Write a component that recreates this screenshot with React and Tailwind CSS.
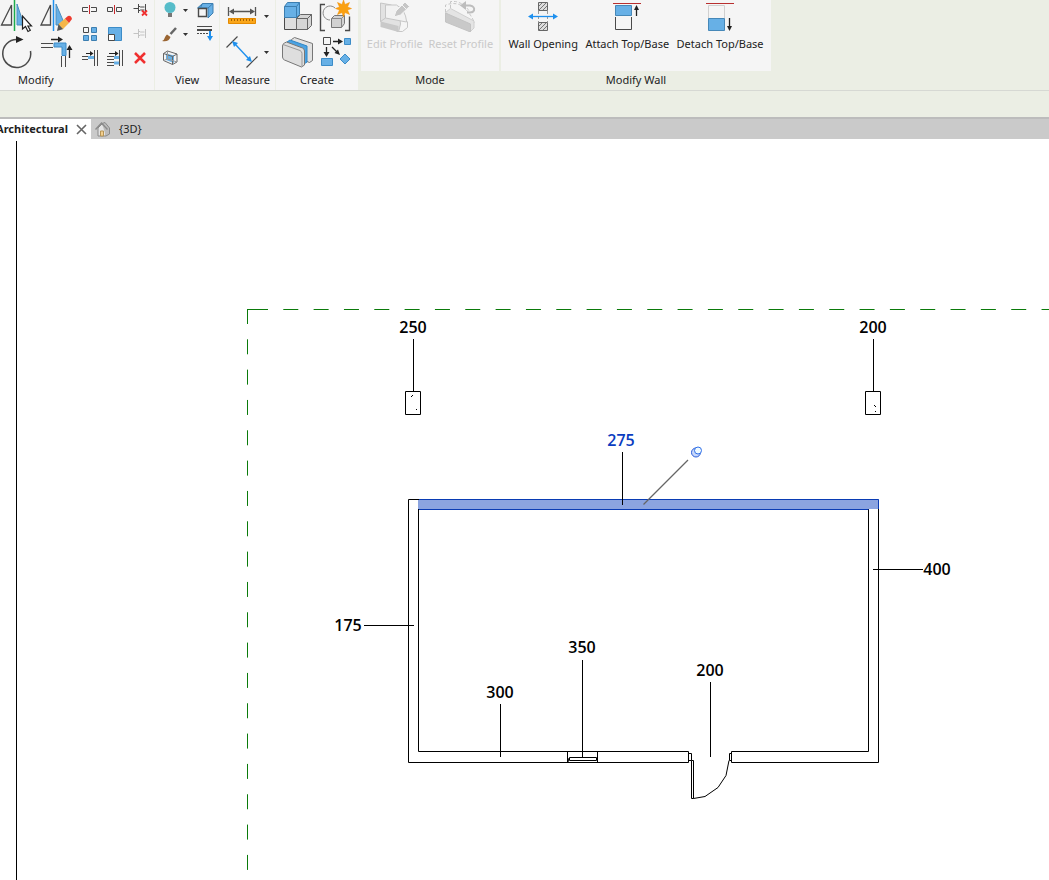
const DARK = "#4a4a4a";
const BLUE = "#67b0e6";
const SKY = "#1e90ee";

/* Every glyph is drawn in ribbon coordinates; `box` selects its part. */
function Glyph({ box, children }) {
  const [, , w, h] = box.split(" ");
  return (
    <svg viewBox={box} width={w} height={h} fill="none" stroke={DARK} strokeWidth="1" aria-hidden="true" className="block shrink-0">
      {children}
    </svg>
  );
}

function Tool({ label, box, children }) {
  return (
    <button type="button" aria-label={label} className="block">
      <Glyph box={box}>{children}</Glyph>
    </button>
  );
}

function LabelTool({ label, box, disabled, children }) {
  return (
    <button
      type="button"
      disabled={disabled}
      className="flex flex-col items-center gap-1 whitespace-nowrap text-[#222] disabled:text-[#c9c9c9]"
    >
      <Glyph box={box}>{children}</Glyph>
      <span className="leading-4">{label}</span>
    </button>
  );
}

function Panel({ title, className, titleClass = "text-center", children }) {
  return (
    <section aria-label={title} className={`flex shrink-0 flex-col bg-[#f5f5f5] ${className}`}>
      <div className="flex h-[71px] items-start">{children}</div>
      <h2 className={`h-[19px] leading-[18px] ${titleClass}`}>{title}</h2>
    </section>
  );
}

const Caret = ({ x, y }) => <path d={`M${x - 3} ${y - 1}h5l-2.500 3z`} fill="#333" stroke="none" />;

const Pin = ({ y, color }) => (
  <g stroke={color}>
    <path d={`M133.500 ${y}h4.500M138.500 ${y - 4.5}v9M138.500 ${y - 2.5}l2 1h4M138.500 ${y + 2.5}l2-1h4M145.500 ${y - 4.5}v9`} />
  </g>
);

function ModifyPanel() {
  return (
    <Panel title="Modify" className="w-[154px]" titleClass="pl-[18px]">
      <div className="grid grid-cols-[39px_39px]">
        <Tool label="Mirror - Pick Axis" box="0 0 39 35">
          <path d="M1.500 25h10V5z" strokeWidth="1.300" />
          <path d="M17 4v21h7z" fill={BLUE} stroke="#4a8fc0" />
          <path d="M14.500 0v31" stroke="#1cab4b" strokeWidth="1.500" />
          <path d="M22.500 16v13l3-2.500 2.500 5 2.300-1.200-2.400-4.300h3.600z" fill="#fff" stroke="#222" strokeWidth="1.200" />
        </Tool>
        <Tool label="Mirror - Draw Axis" box="39 0 39 35">
          <path d="M41 25h9.500V5z" strokeWidth="1.300" />
          <path d="M56 4v21h9z" fill={BLUE} stroke="#4a8fc0" />
          <path d="M53.500 0v31" stroke={SKY} strokeWidth="1.500" />
          <path d="M57 31l1.500-7 5 5z" fill="#555" stroke="none" />
          <path d="M58.500 24l6.500-5.500 4 4.500-6 6z" fill="#f5b64a" stroke="none" />
          <path d="M65 18.500l3-2.500q3-1 4 3l-3 4z" fill="#ee3b2f" stroke="none" />
        </Tool>
        <Tool label="Rotate" box="0 35 39 36">
          <path d="M30.500 51A14 14 0 1 1 17 39.500" strokeWidth="1.500" />
          <path d="M16 36l7.500 3.500L16 43z" fill="#222" stroke="none" />
        </Tool>
        <Tool label="Trim/Extend to Corner" box="39 35 39 36">
          <path d="M41 43.500h12M41 47.500h12M61.500 56v11M65.500 56v11" />
          <path d="M54 43h12v12.500h-4V47h-8z" fill={BLUE} stroke="#3c8cc8" />
          <path d="M51 39.500h8M69.500 58v-9" stroke="#222" strokeWidth="1.300" />
          <path d="M58 36.500l5 3-5 3zM66.500 50l3-5 3 5z" fill="#222" stroke="none" />
        </Tool>
      </div>
      <div className="grid grid-cols-[25px_25px_25px]">
        <Tool label="Split Element" box="78 0 25 22">
          <path d="M88 7.500h-5.500v4h5.500M91 7.500h5.500v4H91" />
          <path d="M89.500 5v9" stroke="#c8282d" />
        </Tool>
        <Tool label="Split with Gap" box="103 0 25 22">
          <path d="M107.500 7.500h5v4h-5zM116.500 7.500h5v4h-5z" />
          <path d="M114.500 5v9" stroke="#c8282d" />
        </Tool>
        <Tool label="Unpin" box="128 0 25 22">
          <Pin y={8.5} color={DARK} />
          <path d="M142 10.500l5 5M147 10.500l-5 5" stroke="#f03030" strokeWidth="1.800" />
        </Tool>
        <Tool label="Array" box="78 22 25 24">
          <path d="M83.500 27.500h5v5h-5z" />
          <path d="M91.500 27.500h5v5h-5zM83.500 35.500h5v5h-5zM91.500 35.500h5v5h-5z" fill={BLUE} stroke="#3c7eb0" />
        </Tool>
        <Tool label="Scale" box="103 22 25 24">
          <path d="M108.500 27.500h13v13h-13z" fill={BLUE} stroke="#3c8cc8" />
          <path d="M108.500 34.500h6v6h-6z" fill="#fff" />
        </Tool>
        <Tool label="Pin" box="128 22 25 24">
          <Pin y={33.5} color="#c4c4c4" />
        </Tool>
        <Tool label="Trim Single" box="78 46 25 24">
          <path d="M82 56.500h6M82 59.500h6M94.500 50v16M97.500 50v16" />
          <path d="M88 56h6v3h-6z" fill={BLUE} stroke="none" />
          <path d="M86 53.500h5" stroke="#222" />
          <path d="M90 51l3.500 2.500-3.500 2.500z" fill="#222" stroke="none" />
        </Tool>
        <Tool label="Trim Multiple" box="103 46 25 24">
          <path d="M107 56.500h7M107 59.500h7M107 62.500h7M107 65.500h7M119.500 50v16M122.500 50v16" />
          <path d="M114 56h5v3h-5zM114 61.500h5v3h-5z" fill={BLUE} stroke="none" />
          <path d="M109 53.500h6" stroke="#222" />
          <path d="M115 51l3.500 2.500-3.500 2.500z" fill="#222" stroke="none" />
        </Tool>
        <Tool label="Delete" box="128 46 25 24">
          <path d="M135 53l10 10M145 53l-10 10" stroke="#f03030" strokeWidth="2.500" />
        </Tool>
      </div>
    </Panel>
  );
}

function ViewPanel() {
  return (
    <Panel title="View" className="w-[64px]">
      <div className="grid grid-cols-[36px_28px]">
        <Tool label="Hide in View" box="155 0 36 22">
          <circle cx="170" cy="7.500" r="5.500" fill="#56bcc9" stroke="none" />
          <path d="M168 13h4v4h-4z" fill="#777" stroke="none" />
          <Caret x={186} y={10} />
        </Tool>
        <Tool label="Selection Box" box="191 0 28 22">
          <path d="M197.500 8l5-4.500H213v9.500l-5 5V8z" fill={BLUE} stroke="#3c7eb0" />
          <path d="M198.500 8.500h8v8h-8z" fill="#f5f5f5" strokeWidth="1.400" />
          <path d="M202.500 3.500l-2 4M213 3.500l-5 4.500" stroke="#3c7eb0" />
        </Tool>
        <Tool label="Override Graphics" box="155 22 36 24">
          <path d="M176 28l-5.500 6" stroke="#666" strokeWidth="2.500" />
          <path d="M162 41c3-1 2-4 5-6.500l3.500 2.500c-1 3.500-4 5-8.500 4z" fill="#9a6532" stroke="none" />
          <Caret x={186} y={34} />
        </Tool>
        <Tool label="Linework" box="191 22 28 24">
          <path d="M197 26.500h15" />
          <path d="M197 30h15" strokeWidth="2" />
          <path d="M197 33.500h12" strokeDasharray="2 1" />
          <path d="M210 31v6" stroke={SKY} strokeWidth="2" />
          <path d="M207 36h6l-3 5z" fill={SKY} stroke="none" />
        </Tool>
        <Tool label="Displace Elements" box="155 46 36 25">
          <path d="M166 53.500l8 2v7.500l-8-3z" fill={BLUE} stroke="none" />
          <path d="M163.500 53.500l9 3v8l-9-4zM163.500 53.500l4-2.500 9.500 3-4.500 2.500M177 54v8l-4.500 2.500" stroke="#666" />
          <path d="M167.500 51v8l9.500 3M167.500 59l-4 1.500" stroke="#999" />
        </Tool>
      </div>
    </Panel>
  );
}

function MeasurePanel() {
  return (
    <Panel title="Measure" className="w-[55px]">
      <div className="flex flex-col">
        <Tool label="Measure Dimension" box="220 0 55 33">
          <path d="M228.500 7v9M255.500 7v9M231 11.500h22" stroke="#555" strokeWidth="1.300" />
          <path d="M229 11.500l5-3v6zM255 11.500l-5-3v6z" fill="#555" stroke="none" />
          <path d="M228.500 18.500h27v5h-27z" fill="#faa61a" stroke="#e58a00" />
          <path d="M231.500 19v2M234.500 19v2M237.500 19v2M240.500 19v2M243.500 19v2M246.500 19v2M249.500 19v2M252.500 19v2" stroke="#a86400" />
          <Caret x={267} y={16} />
        </Tool>
        <Tool label="Aligned Dimension" box="220 33 55 38">
          <path d="M226.500 47.500l11-11M246.500 67.500l11-11" strokeWidth="1.200" />
          <path d="M235 44l14 15" stroke={SKY} strokeWidth="1.400" />
          <path d="M232 41l6 2-4 4zM252 62l-6-2 4-4z" fill={SKY} stroke="none" />
          <Caret x={267} y={52} />
        </Tool>
      </div>
    </Panel>
  );
}

function CreatePanel() {
  return (
    <Panel title="Create" className="w-[82px]">
      <div className="grid grid-cols-[41px_41px]">
        <Tool label="Create Assembly" box="276 0 41 35">
          <path d="M284.500 17.500h12v12h-12z" fill="#dedede" />
          <path d="M296.500 18.500h11v11h-11zM296.500 18.500l4-4h11l-4 4zM307.500 29.500l4-4v-11l-4 4z" fill="#d5d5d5" stroke="#666" />
          <path d="M284.500 6.500l3-4h12v12l-3 3h-12z" fill={BLUE} stroke="#3c7eb0" />
          <path d="M284.500 6.500h12v11M296.500 6.500l3-4" stroke="#3c7eb0" />
        </Tool>
        <Tool label="Create Group" box="317 0 41 35">
          <path d="M325 4.500h-4.500v26h4.500M345 30.500h4.500v-14" strokeWidth="1.400" />
          <path d="M335 8a7 7 0 1 0-5 12" stroke="#888" />
          <path d="M331.500 18.500l3-3h10v8l-3 4h-10z" fill="#d2d2d2" stroke="#777" />
          <path d="M331.500 18.500h10v9M341.500 18.500l3-3" stroke="#888" />
          <path d="M343.500 0l1.500 4.500 4.500-2-2 4.500 4 1.500-4 1.500 2 4.500-4.500-2-1.500 4.500-1.500-4.500-4.500 2 2-4.500-4-1.500 4-1.500-2-4.500 4.500 2z" fill="#faa00f" stroke="#f08c00" strokeWidth=".5" />
        </Tool>
        <Tool label="Create Parts" box="276 35 41 36">
          <path d="M291.500 39.500l3-2 18 6v17l-3 2-18-7z" fill="#e2e2e2" stroke="#777" />
          <path d="M287 42l3-2 17 6v16l-3 2-17-7z" fill="#4ba3e3" stroke="#2f86c6" />
          <path d="M282.500 46q0-2 2-3l2-1 16 6q2 1 2 3v14l-3 2-17-7q-2-1-2-3z" fill="#dedede" stroke="#777" />
          <path d="M283 44.500l17 6q2 1 2 3v13" stroke="#999" />
        </Tool>
        <Tool label="Create Similar" box="317 35 41 36">
          <path d="M323.500 37.500h7v7h-7z" />
          <path d="M344.500 38.500h6v6h-6zM321.500 58.500h11v7h-11zM345 54l5 5-5 5-5-5z" fill={BLUE} stroke="#3c8cc8" />
          <path d="M333 41.500h6M326.500 47v6M332 47l5 5" stroke="#222" strokeWidth="1.300" />
          <path d="M338 38.500l5 3-5 3zM323.500 52h6l-3 5zM340 55l-5.500-2 3.500-3.500z" fill="#222" stroke="none" />
        </Tool>
      </div>
    </Panel>
  );
}

function ModePanel() {
  return (
    <Panel title="Mode" className="w-[138px]" titleClass="bg-[#ebeee4] text-center">
      <div className="flex w-full justify-evenly">
        <LabelTool label="Edit Profile" disabled box="377 0 34 32">
          <path d="M379.500 3v18.500l18 10.500 2-8q0-11-9-19z" fill="#e2e2e2" stroke="#c6c6c6" />
          <path d="M384.500 5v13l21 4v-1q-1-11-10-16z" fill="#f2f2f2" stroke="#c6c6c6" />
          <path d="M379.500 21.500l5-3.500M397.500 31.500h4l5-4v-6" stroke="#c6c6c6" />
          <path d="M379.500 21.500l18 4.500v6l-18-5z" fill="#c9c9c9" stroke="none" />
          <path d="M393 17l2-6 9-9 4.500 4.500-9 8.500z" fill="#c6c6c6" stroke="#f5f5f5" />
          <path d="M401 5l4.500 4.500" stroke="#f5f5f5" />
        </LabelTool>
        <LabelTool label="Reset Profile" disabled box="443 0 36 32">
          <path d="M445.500 12.500l5-4 23.500 12.500v7l-4 4z" fill="#e4e4e4" stroke="#d0d0d0" />
          <path d="M445.500 13v9l25 10v-8z" fill="#c9c9c9" stroke="#c3c3c3" />
          <path d="M445.500 12V5q12-4 19 3t10 15M450.500 8V1.500h5q9 2 14 10" stroke="#c6c6c6" strokeDasharray="3 2" />
          <path d="M465 5.500h5q5 1 4 5-1 2-4 2h-3" stroke="#bdbdbd" strokeWidth="2" />
          <path d="M466 1v9l-6-4.500z" fill="#bdbdbd" stroke="none" />
        </LabelTool>
      </div>
    </Panel>
  );
}

function ModifyWallPanel() {
  return (
    <Panel title="Modify Wall" className="w-[270px]" titleClass="bg-[#ebeee4] text-center">
      <div className="flex w-full justify-evenly">
        <LabelTool label="Wall Opening" box="526 0 32 32">
          <path d="M537.500 2.500h9v8h-9zM537.500 22.500h9v8h-9z" fill="#ddd" stroke="#666" />
          <path d="M538 6l3-3M538 10l7-7M542 10l4-4M538 26l3-3M538 30l7-7M542 30l4-4" stroke="#777" />
          <path d="M537.500 11v11M546.500 11v11" stroke="#999" strokeDasharray="3 2" />
          <path d="M530 16.500h24" stroke={SKY} strokeWidth="1.300" />
          <path d="M527 16.500l5-3v6zM557 16.500l-5-3v6z" fill={SKY} stroke="none" />
        </LabelTool>
        <LabelTool label="Attach Top/Base" box="612 0 32 32">
          <path d="M614 3.500h28" stroke="#b82f2f" />
          <path d="M616.500 5.500h16v10h-16z" fill={BLUE} stroke="#4688b8" />
          <path d="M616.500 17v12.500h16V17" />
          <path d="M637.500 16v-7" stroke="#222" strokeWidth="1.300" />
          <path d="M635 10l2.500-5 2.500 5z" fill="#222" stroke="none" />
        </LabelTool>
        <LabelTool label="Detach Top/Base" box="705 0 32 32">
          <path d="M707 3.500h28" stroke="#b82f2f" />
          <path d="M709.500 18V5.500h16V18" stroke="#d0d0d0" />
          <path d="M709.500 18.500h16v12h-16z" fill={BLUE} stroke="#4688b8" />
          <path d="M730.500 18v9" stroke="#222" strokeWidth="1.300" />
          <path d="M728 26l2.500 5 2.500-5z" fill="#222" stroke="none" />
        </LabelTool>
      </div>
    </Panel>
  );
}

function ViewTabs() {
  return (
    <nav aria-label="Open views" className="flex h-[22px] border-t-2 border-[#bcbcbc] bg-[#cacaca]">
      <div className="flex w-[91px] items-center justify-end gap-2 bg-white pr-1">
        <a href="#plan" className="font-bold">Architectural</a>
        <button type="button" aria-label="Close view" className="shrink-0">
          <svg width="11" height="11" viewBox="0 0 11 11" stroke="#666" strokeWidth="1.600" className="block">
            <path d="M1 1l9 9M10 1l-9 9" />
          </svg>
        </button>
      </div>
      <a href="#3d" className="flex items-center gap-2 pl-1">
        <svg width="16" height="16" viewBox="0 0 16 16" fill="none" stroke="#8a8a8a" aria-hidden="true">
          <path d="M3 7l4-4 4 4.500V15H3z" fill="#e4e4e4" />
          <path d="M11 15l3.500-2V7L10 1.500 7 2.500" fill="#bbb" />
          <path d="M.500 8.500L6.500 2l6 6.500" strokeWidth="1.400" />
          <path d="M5.500 10h3v5h-3z" fill="#f3cf8e" stroke="#b59455" />
        </svg>
        <span>{"{3D}"}</span>
      </a>
    </nav>
  );
}

const TAGS = [
  { text: "250", x: 413, y: 333, line: "M413.500 339v52" },
  { text: "200", x: 873, y: 333, line: "M873.500 339v52" },
  { text: "275", x: 621, y: 446, line: "M622.500 452v53", selected: true },
  { text: "400", x: 937, y: 575, line: "M873 569.500h50" },
  { text: "175", x: 348, y: 631, line: "M364 625.500h50" },
  { text: "350", x: 582, y: 653, line: "M582.500 660v97" },
  { text: "200", x: 710, y: 676, line: "M710.500 682v75" },
  { text: "300", x: 500, y: 698, line: "M500.500 704v53" },
];

function FloorPlan() {
  return (
    <svg role="img" aria-label="Architectural floor plan" className="block h-[741px] w-full" fill="none" stroke="#000" strokeWidth="1">
      <g transform="translate(0 -139)">
        <path d="M16.500 141v760" />
        <g stroke="#0a7a0a">
          <path d="M247.500 309v15M247.500 339.300V900" strokeDasharray="15 15.330" />
          <path d="M247 309.500h21" />
          <path d="M283.300 309.500H4000" strokeDasharray="15 15.330" />
        </g>

        <path d="M405.500 391.500h15v23h-15zM865.500 391.500h15v23h-15z" />
        <path d="M411 397l2-2M416 409.500h1M874 405l2 2M875 411.500h1" />

        <path d="M418.500 499.500h-10v263h280v-11h-270v-242" />
        <path d="M878.500 509v253.500h-147v-11h137V509" />
        <path d="M418 499h461v10h-461z" fill="#8ba4e0" stroke="none" />
        <path d="M418 499.500h460.500V509M418 509.500h450.500" stroke="#0a3cb4" />
        <path d="M418.500 509v10M418.500 499v1" />

        <path d="M567.500 751.500v11M597.500 751.500v11M569.500 757.500h27v3h-27zM569 758l-1 4" />
        <path d="M688.500 753.500h3v7h-3M691.500 760.500h2v38h-2zM731.500 753.500h-2v7h2" />
        <path d="M693.500 798.500l11.500-2 13-9 8-12 3-15" />

        <path d="M643.500 504.500l44.500-44.500" stroke="#666" strokeWidth="1.300" />
        <circle cx="696" cy="452.500" r="4.500" fill="#c8d8fb" stroke="#2a5cd8" />
        <circle cx="698" cy="450.500" r="3.500" fill="#effaff" stroke="#2f6fe8" />

        {TAGS.map((tag) => (
          <g key={tag.line}>
            <path d={tag.line} />
            <text
              x={tag.x}
              y={tag.y}
              textAnchor="middle"
              stroke="none"
              fill={tag.selected ? "#0a3cc0" : "#000"}
              className="font-['Open_Sans',sans-serif] text-[16px] font-semibold"
            >
              {tag.text}
            </text>
          </g>
        ))}
      </g>
    </svg>
  );
}

export default function App() {
  return (
    <div className="min-h-screen overflow-hidden bg-white font-['Noto_Sans',sans-serif] text-[11px] text-[#222]">
      <header className="bg-[#ebeee4]">
        <div className="flex h-[91px] gap-px border-b border-[#d6d8d3]">
          <ModifyPanel />
          <ViewPanel />
          <MeasurePanel />
          <CreatePanel />
          <div className="flex gap-0.5 pl-0.5">
            <ModePanel />
            <ModifyWallPanel />
          </div>
        </div>
        <div className="h-[26px]" />
      </header>
      <ViewTabs />
      <main>
        <FloorPlan />
      </main>
    </div>
  );
}
